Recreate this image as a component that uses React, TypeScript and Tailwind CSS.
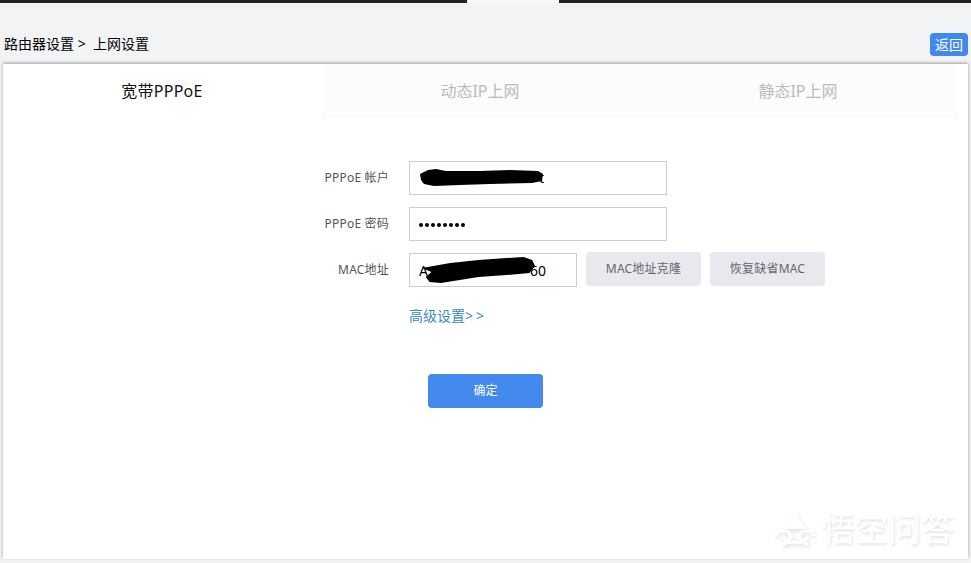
import React from 'react';

const FONT = "font-['Noto_Sans','Noto_Sans_CJK_SC',sans-serif]";

const Scribble: React.FC<{ className: string; d: string; viewBox: string }> = ({ className, d, viewBox }) => (
  <svg className={`absolute pointer-events-none ${className}`} viewBox={viewBox} preserveAspectRatio="none" fill="#000">
    <path d={d} />
  </svg>
);

const FormRow: React.FC<{ label: string; children: React.ReactNode }> = ({ label, children }) => (
  <div className="flex items-center">
    <label className="w-[406px] pr-5 text-right text-xs tracking-[0.2px] text-[#555]">{label}</label>
    {children}
  </div>
);

export default function App() {
  return (
    <div className={`relative flex h-[563px] w-[971px] flex-col overflow-hidden bg-[#f2f3f5] ${FONT}`}>
      {/* top nav strip */}
      <div className="flex h-[3px] shrink-0">
        <div className="w-[467px] bg-[#222226]" />
        <div className="w-[92px] bg-[#f8f8f9]" />
        <div className="flex-1 bg-[#222226]" />
      </div>

      <div className="flex h-[61px] shrink-0 items-end justify-between pb-2 pl-1 pr-[3px]">
        <div className="h-[24px] text-sm leading-[24px] text-black">
          路由器设置&nbsp;&gt;&nbsp; 上网设置
        </div>
        <button className="h-[23px] w-[38px] rounded-sm bg-[#3f88ee] text-sm leading-[23px] text-white">返回</button>
      </div>

      {/* main card */}
      <div className="mx-[3px] h-[495px] shrink-0 bg-white shadow-[0_-1px_3px_rgba(0,0,0,0.35)]">
        <div className="flex h-[54px] pr-[10px]">
          <div className="flex w-[319px] items-center justify-center pr-[1px] text-base tracking-[0.25px] text-[#111]">宽带PPPoE</div>
          <div className="flex w-[318px] items-center justify-center bg-[#fcfcfc] pr-[2px] text-base text-[#bbb]">动态IP上网</div>
          <div className="flex flex-1 items-center justify-center bg-[#fcfcfc] pr-[2px] text-base text-[#bbb]">静态IP上网</div>
        </div>

        <div className="mt-[43px] flex flex-col gap-3">
          <FormRow label="PPPoE 帐户">
            <div className="relative">
              <div className="h-[34px] w-[258px] border border-[#ccc] pl-[9px] text-sm leading-[32px] text-black">
                <div className="flex w-[125px] justify-between">
                  <span>1</span>
                  <span>t</span>
                </div>
              </div>
              <Scribble
                className="left-[11px] top-[8px] h-[17px] w-[124px]"
                viewBox="0 0 124 17"
                d="M0 5 L8 1 L16 0 L26 2 L60 2 L90 1 L118 2 L123 5 L122 12 L112 14 L70 15 L40 16 L14 17 L4 15 L1 11 Z"
              />
            </div>
          </FormRow>
          <FormRow label="PPPoE 密码">
            <div className="flex h-[34px] w-[258px] items-center gap-[2px] border border-[#ccc] pl-[9px] pt-[1px]">
              {[0, 1, 2, 3, 4, 5, 6, 7].map((i) => (
                <span key={i} className="h-1 w-1 rounded-full bg-black" />
              ))}
            </div>
          </FormRow>
          <FormRow label="MAC地址">
            <div className="relative">
              <div className="flex h-[34px] w-[168px] justify-between border border-[#ccc] pl-[9px] pr-[30px] text-sm leading-[34px] text-black">
                <span>A</span>
                <span>60</span>
              </div>
              <Scribble
                className="left-[13px] top-[4px] h-[26px] w-[113px]"
                viewBox="0 0 120 26"
                d="M0 11 L30 6 L60 3 L90 1 L108 0 L117 3 L120 9 L114 16 L90 18 L60 20 L40 23 L20 26 L8 25 L4 20 L10 15 Z"
              />
            </div>
            <button className="ml-[9px] h-[34px] w-[115px] -translate-y-px rounded-sm bg-[#e7e9ef] text-xs tracking-[0.2px] text-[#666]">MAC地址克隆</button>
            <button className="ml-[9px] h-[34px] w-[115px] -translate-y-px rounded-sm bg-[#e7e9ef] text-xs tracking-[0.2px] text-[#666]">恢复缺省MAC</button>
          </FormRow>
        </div>

        <div className="mt-[19px] pl-[406px] text-sm leading-[20px] text-[#3a8bb8]">
          高级设置<span className="tracking-[3px]">&gt;&gt;</span>
        </div>

        <button className="mt-[48px] ml-[425px] h-[34px] w-[115px] rounded-sm bg-[#4489ee] text-xs text-white">确定</button>
      </div>

      {/* watermark */}
      <div className="absolute left-[774px] top-[509px] flex items-center gap-[6px] text-white">
        <svg width="42" height="40" viewBox="0 0 42 40" fill="none" stroke="#fff" strokeWidth="3" className="drop-shadow-[1px_2px_2px_rgba(0,0,0,0.12)]">
          <path d="M21 3 L14 14 Q10 18 11 20 H31 Q32 18 28 14 Z" fill="#fff" stroke="none" />
          <path d="M2 27 C2 20 15 20 17 27 C16 33 8 32 9 27 M40 27 C40 20 27 20 25 27 C26 33 34 32 33 27" />
          <path d="M8 35 Q21 31 34 35" />
        </svg>
        <span className="text-[33px] leading-[40px] [text-shadow:1px_2px_3px_rgba(0,0,0,0.12)]">悟空问答</span>
      </div>
    </div>
  );
}
